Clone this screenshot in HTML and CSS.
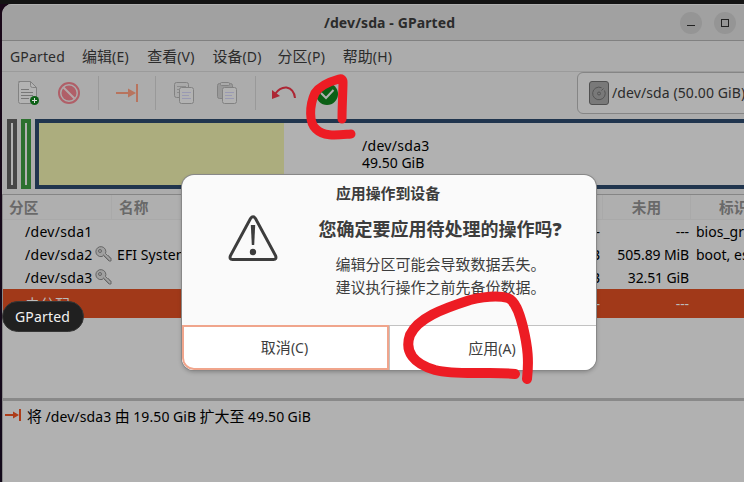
FILE: index.html
```html
<!DOCTYPE html>
<html lang="zh-CN">
<head>
<meta charset="utf-8">
<title>/dev/sda - GParted</title>
<link rel="stylesheet" href="styles.css">
</head>
<body>
<main class="window">
  <header class="titlebar">
    <h1 class="title">/dev/sda - GParted</h1>
    <div class="controls">
      <button class="control" aria-label="最小化"><svg width="22" height="22"><path d="M7 13.5h8" stroke="#222"/></svg></button>
      <button class="control" aria-label="最大化"><svg width="22" height="22"><rect x="7.5" y="7.5" width="7" height="7" fill="none" stroke="#222"/></svg></button>
    </div>
  </header>
  <nav class="menubar">
    <span class="menu menu-app">GParted</span>
    <span class="menu">编辑<i>(E)</i></span>
    <span class="menu">查看<i>(V)</i></span>
    <span class="menu">设备<i>(D)</i></span>
    <span class="menu">分区<i>(P)</i></span>
    <span class="menu">帮助<i>(H)</i></span>
  </nav>
  <div class="toolbar">
    <svg class="tool tool-new" width="24" height="26" fill="none">
      <path d="M2.5 1.500h12l6 6v14q0 2-2 2h-14q-2 0-2-2v-18q0-2 2-2" fill="#b3b3b3" stroke="#828282"/>
      <path d="M14.500 1.500v4q0 2 2 2h4" stroke="#828282"/>
      <path d="M5 9.500h8M5 12.500h12M5 15.500h12M5 18.500h8" stroke="#777"/>
      <circle cx="18.500" cy="20.500" r="4.500" fill="#0c6016"/><path d="M16 20.500h5M18.500 18v5" stroke="#ddd"/>
    </svg>
    <svg class="tool tool-stop" width="24" height="24" fill="none">
      <circle cx="12" cy="12" r="10" stroke="#b05f68" stroke-width="2"/><circle cx="12" cy="12" r="7.500" fill="#b05f68"/><path d="M6.500 6.500l11 11" stroke="#b5a8a9" stroke-width="2"/>
    </svg>
    <span class="divider"></span>
    <svg class="tool tool-resize" width="24" height="20" fill="none"><path d="M1 10h14" stroke="#b8745e" stroke-width="2"/><path d="M13 5.500l8 4.500-8 4.500z" fill="#b8745e"/><path d="M22 1v18" stroke="#b8745e" stroke-width="2"/></svg>
    <span class="divider"></span>
    <svg class="tool tool-copy" width="22" height="24" fill="none">
      <rect x="1.500" y="1.500" width="14" height="15" rx="2" fill="#aaa" stroke="#828282"/><path d="M4 5.500h9M4 8.500h3M4 11.500h3" stroke="#8c8c8c"/>
      <rect x="6.500" y="6.500" width="14" height="16" rx="2" fill="#b2b2b2" stroke="#828282"/><path d="M9 11.500h9M9 14.500h7M9 17.500h9" stroke="#9999b3"/>
    </svg>
    <svg class="tool tool-paste" width="22" height="24" fill="none">
      <rect x="1.500" y="2.500" width="15" height="15" rx="2" fill="#999" stroke="#828282"/><rect x="4.500" y="1.500" width="9" height="3" rx="1" fill="#aaa" stroke="#828282"/>
      <rect x="6.500" y="6.500" width="14" height="16" rx="2" fill="#b2b2b2" stroke="#828282"/><path d="M9 11.500h9M9 14.500h7M9 17.500h9" stroke="#9999b3"/>
    </svg>
    <span class="divider"></span>
    <svg class="tool tool-undo" width="26" height="16" fill="none"><path d="M4 9Q9 2 15.500 2.500 23 4 24 13" stroke="#ad2634" stroke-width="2"/><path d="M1 5v9l8-3z" fill="#ad2634"/></svg>
    <svg class="tool tool-apply" width="24" height="24" fill="none"><circle cx="12" cy="12" r="11" fill="#0c6016"/><path d="M6 11l5 5 7.500-8" stroke="#b2b2b2" stroke-width="2"/></svg>
    <button class="device">
      <svg width="20" height="24" fill="none"><rect x=".5" y=".5" width="19" height="23" rx="2.500" fill="#797979" stroke="#505050"/><path d="M14.500 7.500l-2 2M15.500 9.500a6.300 6.300 0 1 1-3-2.800" stroke="#555"/><circle cx="10" cy="12.500" r="1.500" stroke="#555"/></svg>
      <span>/dev/sda (50.00 GiB)</span>
    </button>
  </div>
  <section class="disk">
    <div class="part part-bios"></div>
    <div class="part part-efi"></div>
    <div class="part part-root">
      <div class="used"></div>
      <div class="part-label">/dev/sda3<br><span>49.50 GiB</span></div>
    </div>
  </section>
  <section class="table">
    <div class="row head"><span>分区</span><span>名称</span><span></span><span class="center">未用</span><span class="flags">标识</span></div>
    <div class="row"><span class="path">/dev/sda1</span><span></span><span class="num">---</span><span class="num">---</span><span>bios_grub</span></div>
    <div class="row"><span class="path">/dev/sda2<svg class="key" width="17" height="17" fill="none" stroke="#666"><path d="M8.500 9.500l5.500 5.500h2v-3l-1.500-.5-.5-1.500-1.500-.5-2-2A5 5 0 1 0 7 10.500z" fill="#a0a0a0"/><circle cx="5" cy="5" r="1.500"/><path d="M8 8l6 6" stroke="#888"/></svg></span><span class="name">EFI System Partition</span><span class="num">6.11 MiB</span><span class="num">505.89 MiB</span><span>boot, esp</span></div>
    <div class="row"><span class="path">/dev/sda3<svg class="key" width="17" height="17" fill="none" stroke="#666"><path d="M8.500 9.500l5.500 5.500h2v-3l-1.500-.5-.5-1.500-1.500-.5-2-2A5 5 0 1 0 7 10.500z" fill="#a0a0a0"/><circle cx="5" cy="5" r="1.500"/><path d="M8 8l6 6" stroke="#888"/></svg></span><span></span><span class="num">16.99 GiB</span><span class="num">32.51 GiB</span><span></span></div>
    <div class="row selected"><span class="path cjk">未分配</span><span></span><span class="num">---</span><span class="num">---</span><span></span></div>
  </section>
  <section class="operations">
    <svg width="16" height="14" fill="none"><path d="M0 6h10" stroke="#ad3c19" stroke-width="2"/><path d="M8 2.500l6 3.500-6 3.500z" fill="#ad3c19"/><path d="M15 0v12" stroke="#ad3c19" stroke-width="2"/></svg>
    <p>将 <i>/dev/sda3</i> 由 <i>19.50 GiB</i> 扩大至 <i>49.50 GiB</i></p>
  </section>
</main>
<div class="tooltip">GParted</div>
<div class="dialog" role="alertdialog">
  <h2>应用操作到设备</h2>
  <div class="dialog-body">
    <svg class="warning" width="50" height="48" fill="none"><path d="M22.500 3.500Q25 0 27.500 3.500L47.500 40.500Q49 44.500 45.500 44.500H4.500Q1 44.500 2.500 40.500Z" stroke="#3d3d3d" stroke-width="3"/><path d="M22.800 10h4.400l-1 20h-2.400z" fill="#3d3d3d"/><circle cx="25" cy="37" r="3.200" fill="#3d3d3d"/></svg>
    <div class="message"><h3>您确定要应用待处理的操作吗<b>?</b></h3><p>编辑分区可能会导致数据丢失。</p><p>建议执行操作之前先备份数据。</p></div>
  </div>
  <footer><button class="cancel">取消<i>(C)</i></button><button class="apply">应用<i>(A)</i></button></footer>
</div>
<svg class="marks" width="744" height="482" fill="none" stroke="#ed1c24" stroke-linecap="round" stroke-linejoin="round">
  <path stroke-width="9" d="M342 119C342 106 343 91 343 82Q343 78 339 79Q321 84 315 93C309 106 309 123 316 129C324 137 337 135 351 134"/>
  <path stroke-width="10" d="M515 374C490 371 459 376 435 370C414 364 404 352 410 335C418 318 442 309 470 300C487 296 500 296 508 298C515 301 519 311 523 327C528 348 529 361 527 379"/>
</svg>
</body>
</html>
```
FILE: styles.css
```css
* { box-sizing: border-box; }
body { margin: 0; width: 744px; height: 482px; overflow: hidden; padding: 4px 0 0 2px; background: linear-gradient(#131313 4px, #190718 4px, #12091a 100%); font: 14px/18px "Noto Sans", "Noto Sans CJK SC", sans-serif; color: #2b2b2b; }
h1, h2, h3, p { margin: 0; }
i { font-style: normal; font-size: 14px; letter-spacing: 0; }
button { font: inherit; color: inherit; border: 0; padding: 0; margin: 0; background: none; }
svg { display: block; flex: none; }
.window { height: 478px; background: #acacac; border-radius: 10px 0 0 0; overflow: hidden; display: flex; flex-direction: column; }
.titlebar { height: 37px; flex: none; display: flex; align-items: center; justify-content: flex-end; background: #a1a1a1; border-top: 1px solid #b1b1b1; border-bottom: 1px solid #818181; }
.title { font-size: 14px; line-height: 20px; width: 134px; margin-right: 222px; white-space: nowrap; letter-spacing: .1px; }
.controls { display: flex; gap: 12px; padding-right: 8px; }
.control { width: 22px; height: 22px; border-radius: 50%; background: #959595; }
.menubar { height: 31px; flex: none; display: flex; gap: 17px; padding: 1px 0 0 8px; align-items: center; border-bottom: 1px solid #9b9b9b; }
.menu { font-size: 15px; white-space: nowrap; width: 48.2px; }
.menu i { letter-spacing: .2px; }
.menu-app { font-size: 14px; width: 55px; letter-spacing: .15px; }
.toolbar { height: 47px; flex: none; display: flex; align-items: center; padding: 0 0 5px 14px; }
.divider { width: 1px; height: 34px; background: #999; flex: none; }
.tool-new { margin-right: 17px; }
.tool-stop { margin-right: 17px; }
.tool-resize { margin: 0 16px; }
.tool-copy { margin: 0 21px 0 17px; }
.tool-paste { margin-right: 17px; }
.tool-undo { margin: 0 18px 0 15px; }
.tool-apply { margin-top: 2px; }
.device { display: flex; align-items: center; gap: 3px; margin-left: 238px; width: 220px; height: 42px; flex: none; padding-left: 11px; background: #b0b0b0; border: 1px solid #858585; border-radius: 6px; white-space: nowrap; letter-spacing: .1px; }
.disk { height: 70px; flex: none; display: flex; gap: 4px; padding-left: 5px; }
.part { border: 4px solid; width: 10px; background: #b1b1b1; flex: none; }
.part-bios { border-color: #464646; }
.part-efi { border-color: #2c702f; }
.part-root { width: 725px; border-color: #20354e; display: flex; }
.used { width: 245px; background: #acad7e; }
.part-label { margin: 14px 0 0 78px; line-height: 17px; color: #000; letter-spacing: .3px; }
.part-label span { letter-spacing: 0; }
.table { height: 204px; flex: none; margin-top: 5px; border-top: 1px solid #858585; border-left: 1px solid #898989; background: #b1b1b1; }
.row { display: grid; grid-template-columns: 109px 404px 87px 88px 80px; height: 23px; align-items: center; white-space: nowrap; color: #000; }
.row > span { padding-left: 5px; }
.head { height: 25px; color: #696969; font-weight: 700; font-size: 14.67px; background: #afafaf; border-bottom: 1px solid #a9a9a9; }
.head > span { padding-left: 7px; height: 24px; line-height: 24px; border-right: 1px solid #a9a9a9; }
.head > span:first-child { padding-left: 6px; }
.head > span:nth-child(2) { border-right: 0; }
.head > .center { text-align: center; padding: 0; }
.head > .flags { padding-left: 28px; }
.row > .path { padding-left: 22px; display: flex; align-items: center; letter-spacing: .3px; }
.key { margin-left: 2px; }
.name { letter-spacing: .1px; }
.row > .num { text-align: right; padding-right: 2px; letter-spacing: -.12px; }
.table .row:not(.head) > .num:nth-child(3) { padding-right: 3px; }
.selected { height: 29px; background: #a13919; color: #bbb; }
.cjk { font-size: 14.67px; }
.operations { flex: 1; display: flex; align-items: flex-start; gap: 6px; padding: 8px 0 0 2px; background: #b1b1b1; border-top: 3px solid #898989; border-left: 1px solid #898989; color: #000; }
.operations p { font-size: 15px; line-height: 18px; margin-top: -2px; white-space: nowrap; word-spacing: -.5px; }
.operations i { letter-spacing: .12px; }
.tooltip { position: absolute; left: 2px; top: 301px; width: 82px; height: 31px; border-radius: 16px; background: #202020; border: 1px solid #363636; color: #f2f2f2; text-align: center; line-height: 30px; letter-spacing: .15px; padding-right: 1px; }
.dialog { position: absolute; left: 182px; top: 175px; width: 414px; height: 195px; border-radius: 12px; background: #fafafa; color: #3d3d3d; overflow: hidden; box-shadow: 0 0 0 1px #888, 0 2px 4px #0004; display: flex; flex-direction: column; }
h2 { text-align: center; font-size: 14.9px; line-height: 20px; padding: 8px 2px 0 0; height: 37px; }
.dialog-body { display: flex; height: 113px; padding-left: 46px; }
.warning { margin-top: 3px; }
.message { width: 248px; margin-left: 38px; text-align: center; font-size: 15px; line-height: 23px; white-space: nowrap; }
h3 { font-size: 18px; line-height: 34px; height: 41px; }
.message p { font-size: 15px; padding-left: 1px; }
footer { display: grid; grid-template-columns: 207px 207px; height: 45px; border-top: 1px solid #c2c2c2; background: #fff; }
footer button { font-size: 15px; padding-right: 2px; }
footer .cancel { border: 2px solid #f0a58c; border-radius: 0 0 0 12px; margin-top: -1px; }
footer .apply { border-left: 1px solid #c2c2c2; }
.marks { position: absolute; left: 0; top: 0; pointer-events: none; }
```
